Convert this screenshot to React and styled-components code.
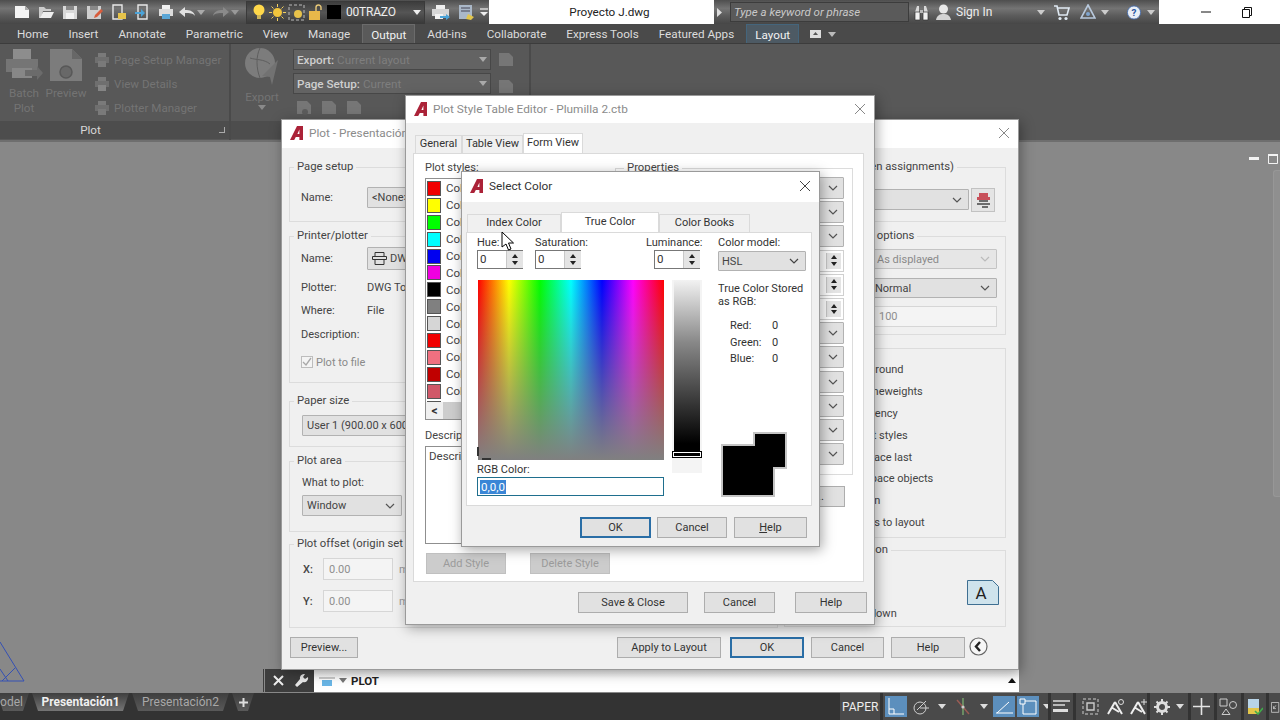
import React from "react";
import styled, { createGlobalStyle } from "styled-components";

const GlobalStyle = createGlobalStyle`
  html, body { margin: 0; padding: 0; background: #888; }
  body { font-family: Roboto, "Noto Sans", "Liberation Sans", sans-serif; font-size: 11px; color: #333; }
  * { box-sizing: border-box; }
`;

const Page = styled.div`
  position: relative;
  width: 1280px;
  height: 720px;
  overflow: hidden;
  display: flex;
  flex-direction: column;
`;

/* title bar */
const TitleBar = styled.div`
  height: 24px;
  display: flex;
  background: #fff;
  flex: none;
`;
const DarkStrip = styled.div`
  display: flex;
  align-items: center;
  height: 24px;
  background: linear-gradient(#4e4e4e, #747474 35%, #5c5c5c 65%, #474747);
`;
const Qat = styled(DarkStrip)`
  width: 489px;
  padding-left: 10px;
`;
const QatItem = styled.div`
  width: ${(p) => p.$w || 24}px;
  height: 24px;
  flex: none;
  display: flex;
  align-items: center;
  justify-content: ${(p) => (p.$start ? "flex-start" : "center")};
`;
const LayerCombo = styled.div`
  width: 179px;
  height: 23px;
  padding-left: 3px;
  display: flex;
  align-items: center;
  background: linear-gradient(#3d3d3d, #555 50%, #3a3a3a);
  border: 1px solid #3a3a3a;
  flex: none;
`;
const LayerName = styled.span`
  flex: 1;
  margin-left: 2px;
  color: #eee;
  font-size: 12px;
  letter-spacing: -0.2px;
`;
const DocTitle = styled.div`
  width: 225px;
  text-align: center;
  line-height: 24px;
  color: #222;
  font-size: 11.7px;
  padding-left: 16px;
`;
const InfoCenter = styled(DarkStrip)`
  width: 445px;
  padding-left: 2px;
`;
const SearchBox = styled.div`
  width: 179px;
  height: 20px;
  margin-left: 8px;
  padding-left: 3px;
  background: #5a5a5a;
  border: 1px solid #3c3c3c;
  color: #c9c9c9;
  font-style: italic;
  font-size: 11.5px;
  line-height: 18px;
  flex: none;
`;
const SignIn = styled.span`
  color: #eee;
  font-size: 12px;
  width: 80px;
  margin-left: 3px;
  flex: none;
`;
const WinButtons = styled.div`
  flex: 1;
  display: flex;
  align-items: center;
  padding-left: 42px;
  gap: 31px;
`;

/* ribbon */
const TabsBar = styled.div`
  height: 20px;
  flex: none;
  display: flex;
  align-items: stretch;
  padding-left: 7px;
  background: #4a4a4a;
  border-bottom: 1px solid #3c3c3c;
`;
const RibbonTab = styled.div`
  padding: 1px 10px 0;
  display: flex;
  align-items: center;
  font-size: 11.7px;
  color: ${(p) => (p.$active || p.$layout ? "#f2f2f2" : "#dcdcdc")};
  background: ${(p) => (p.$active ? "#5a5a5a" : p.$layout ? "#4d5a64" : "transparent")};
  border: ${(p) => (p.$active ? "1px solid #6b6b6b" : p.$layout ? "1px solid #44657c" : "0")};
  border-bottom: 0;
  ${(p) => p.$active && "padding: 1px 8px 0; margin: 0 2px 0 2px;"}
  ${(p) => p.$layout && "padding: 1px 8px 0; margin-left: 2px;"}
`;
const Ribbon = styled.div`
  height: 98px;
  flex: none;
  display: flex;
  background: #585858;
  border-bottom: 2px solid #6e6e6e;
`;
const Panel = styled.div`
  width: ${(p) => p.$w}px;
  flex: none;
  display: flex;
  flex-direction: column;
  border-right: 2px solid #4a4a4a;
`;
const PanelBody = styled.div`
  flex: 1;
  display: flex;
  padding: 4px 0 0 ${(p) => p.$pad || 6}px;
`;
const PanelTitle = styled.div`
  height: 18px;
  margin-bottom: 1px;
  padding-right: ${(p) => p.$pr || 0}px;
  position: relative;
  background: #4d4d4d;
  color: #d6d6d6;
  text-align: center;
  line-height: 18px;
  font-size: 11.7px;
`;
const PanelCorner = styled.span`
  position: absolute;
  right: 4px;
  top: 6px;
  width: 6px;
  height: 6px;
  border-right: 1px solid #aaa;
  border-bottom: 1px solid #aaa;
`;
const BigTool = styled.div`
  width: ${(p) => p.$w}px;
  flex: none;
  display: flex;
  flex-direction: column;
  align-items: center;
  text-align: center;
  font-size: 11.7px;
  line-height: 15px;
  color: #747474;
`;
const BigLabel = styled.div`
  margin-top: 4px;
`;
const SmallTools = styled.div`
  display: flex;
  flex-direction: column;
  gap: 6px;
  margin: 3px 0 0 5px;
`;
const SmallTool = styled.div`
  height: 18px;
  display: flex;
  align-items: center;
  gap: 4px;
  color: #747474;
  font-size: 11.6px;
`;
const ExportStack = styled.div`
  margin: 1px 0 0 12px;
  display: flex;
  flex-direction: column;
`;
const ExtraStack = styled.div`
  margin: 4px 0 0 7px;
  display: flex;
  flex-direction: column;
  gap: 10px;
`;
const RibbonCombo = styled.div`
  width: 198px;
  height: 21px;
  padding: 0 3px;
  display: flex;
  align-items: center;
  background: #636363;
  border: 1px solid #474747;
  color: #7e7e7e;
  font-size: 11.7px;
  margin-bottom: 3px;
`;
const ComboKey = styled.b`
  color: #cfcfcf;
  font-weight: 500;
  margin-right: 3px;
`;
const ComboFill = styled.span`
  flex: 1;
`;
const MiniRow = styled.div`
  display: flex;
  gap: 9px;
  margin: 3px 0 0 3px;
`;

/* workspace */
const Workspace = styled.div`
  position: relative;
  flex: 1;
  background: #888;
`;
const ViewControls = styled.div`
  position: absolute;
  right: 2px;
  top: 12px;
  display: flex;
  align-items: center;
  gap: 9px;
`;
const NavStrip = styled.div`
  position: absolute;
  right: 0;
  top: 28px;
  width: 7px;
  height: 327px;
  background: #8f8f8f;
  border: 1px solid #979797;
  border-right: 0;
  border-radius: 3px 0 0 3px;
`;
const Ucs = styled.svg`
  position: absolute;
  left: 0;
  bottom: 10px;
`;
const CommandBar = styled.div`
  position: absolute;
  left: 262px;
  bottom: 1px;
  width: 757px;
  height: 23px;
  display: flex;
  align-items: center;
`;
const CommandTools = styled.div`
  width: 52px;
  height: 100%;
  padding-left: 8px;
  display: flex;
  align-items: center;
  gap: 10px;
  background: #3d3d3d;
  border-left: 3px double #8a8a8a;
`;
const CommandInput = styled.div`
  flex: 1;
  height: 100%;
  padding: 0 3px 0 5px;
  display: flex;
  align-items: center;
  gap: 4px;
  background: linear-gradient(#ececec, #fff 40%);
  font-size: 11.5px;
  font-weight: 700;
  color: #222;
`;

/* status bar */
const StatusBar = styled.div`
  height: 27px;
  flex: none;
  display: flex;
  align-items: flex-start;
  background: #333;
`;
const LayoutTab = styled.div`
  width: ${(p) => p.$w}px;
  height: 18px;
  margin: 0 3px 0 ${(p) => p.$ml || 0}px;
  padding-right: ${(p) => (p.$cut ? 6 : 0)}px;
  display: flex;
  align-items: center;
  justify-content: ${(p) => (p.$cut ? "flex-end" : "center")};
  font-size: 12px;
  font-weight: ${(p) => (p.$active ? 700 : 400)};
  color: ${(p) => (p.$active ? "#f0f0f0" : "#a8a8a8")};
  background: linear-gradient(#3e3e3e, ${(p) => (p.$active ? "#757575" : "#595959")});
  clip-path: polygon(0 0, 100% 0, calc(100% - 6px) 100%, 6px 100%);
`;
const StatusIcons = styled.div`
  margin-left: auto;
  width: 440px;
  height: 27px;
  display: flex;
  gap: 3px;
`;
const StatusGroup = styled.div`
  width: ${(p) => p.$w}px;
  height: 27px;
  flex: none;
  display: flex;
  align-items: center;
  padding: 0 2px;
  gap: 2px;
  background: #4a4a4a;
  overflow: hidden;
`;
const StatusBtn = styled.div`
  width: ${(p) => p.$w || 22}px;
  height: 21px;
  flex: none;
  display: flex;
  align-items: center;
  justify-content: center;
  background: ${(p) => (p.$on ? "#5c8fbd" : "transparent")};
`;
const PaperLabel = styled.span`
  width: 100%;
  text-align: center;
  color: #eee;
  font-size: 12px;
`;

/* dialogs */
const Dialog = styled.div`
  position: absolute;
  left: ${(p) => p.$x}px;
  top: ${(p) => p.$y}px;
  width: ${(p) => p.$w}px;
  height: ${(p) => p.$h}px;
  display: flex;
  flex-direction: column;
  background: #f0f0f0;
  border: 1px solid #9a9a9a;
  box-shadow: 2px 3px 12px rgba(0, 0, 0, 0.35);
  overflow: hidden;
`;
const DialogHead = styled.div`
  height: ${(p) => p.$h}px;
  flex: none;
  padding: 0 8px 2px;
  display: flex;
  align-items: center;
  gap: 5px;
  background: #fff;
  color: ${(p) => (p.$active ? "#333" : "#8b8b8b")};
  font-size: 11.8px;
`;
const HeadText = styled.span`
  flex: 1;
`;
const PlotBody = styled.div`
  flex: 1;
  padding: 11px 11px 0 7px;
  display: grid;
  grid-template-columns: 489px 222px;
  grid-template-rows: 469px 20px;
  column-gap: 6px;
  row-gap: 9px;
`;
const Column = styled.div`
  display: flex;
  flex-direction: column;
  min-width: 0;
`;
const Group = styled.fieldset`
  margin: ${(p) => p.$mt || 0}px 0 0;
  padding: ${(p) => p.$pt || 0}px ${(p) => p.$pr || 8}px 0 ${(p) => p.$pl || 11}px;
  height: ${(p) => p.$h}px;
  min-width: 0;
  flex: none;
  border: 1px solid #dcdcdc;
`;
const Legend = styled.legend`
  margin-left: ${(p) => p.$ml ?? -7}px;
  padding: 0 3px;
  width: max-content;
  line-height: 16px;
  font-size: 11.3px;
  white-space: nowrap;
  color: #444;
`;
const Row = styled.div`
  margin-top: ${(p) => p.$mt || 0}px;
  display: flex;
  align-items: center;
  min-height: ${(p) => p.$h || 20}px;
  color: ${(p) => (p.$dim ? "#8a8a8a" : "#444")};
  white-space: nowrap;
`;
const FieldLabel = styled.span`
  width: ${(p) => p.$w}px;
  flex: none;
  font-weight: ${(p) => (p.$bold ? 500 : 400)};
`;
const Unit = styled.span`
  width: 30px;
  margin-left: 6px;
  flex: none;
  color: #999;
`;
const Combo = styled.div`
  flex: ${(p) => (p.$w ? "none" : 1)};
  width: ${(p) => (p.$w ? `${p.$w}px` : "auto")};
  min-width: 0;
  height: ${(p) => p.$h || 21}px;
  margin-top: ${(p) => p.$mt || 0}px;
  padding: 0 6px 0 ${(p) => p.$pl || 4}px;
  display: flex;
  align-items: center;
  background: ${(p) => (p.$off ? "#e6e6e6" : "#e1e1e1")};
  border: 1px solid ${(p) => (p.$off ? "#c4c4c4" : "#b2b2b2")};
  border-radius: 1px;
  color: ${(p) => (p.$off ? "#8a8a8a" : "#444")};
  white-space: nowrap;
`;
const ComboText = styled.span`
  flex: 1;
  overflow: hidden;
  display: flex;
  align-items: center;
  gap: 3px;
`;
const Edit = styled.div`
  width: ${(p) => (p.$w ? `${p.$w}px` : "auto")};
  flex: ${(p) => (p.$w ? "none" : 1)};
  height: ${(p) => p.$h || 21}px;
  padding-left: 5px;
  display: flex;
  align-items: center;
  background: #f4f4f4;
  border: 1px solid #d6d6d6;
  color: #8f8f8f;
`;
const Btn = styled.div`
  width: ${(p) => p.$w}px;
  height: 21px;
  flex: none;
  margin-left: ${(p) => p.$ml || 0}px;
  display: flex;
  align-items: center;
  justify-content: center;
  font-size: 11px;
  color: ${(p) => (p.$off ? "#9b9b9b" : "#333")};
  background: ${(p) => (p.$off ? "#cccccc" : "#e1e1e1")};
  border: ${(p) => (p.$primary ? "2px solid #2a6ea6" : `1px solid ${p.$off ? "#c0c0c0" : "#adadad"}`)};
`;
const Mnemonic = styled.span`
  text-decoration: underline;
`;
const FootRow = styled.div`
  grid-column: 1 / -1;
  display: flex;
  align-items: center;
  padding-left: 1px;
`;
const FootRight = styled.div`
  margin-left: auto;
  padding-right: 41px;
  display: flex;
  align-items: center;
  position: relative;
`;
const BackCircle = styled.svg`
  position: absolute;
  right: 18px;
  top: 0;
`;
const CheckBox = styled.span`
  width: 12px;
  height: 12px;
  margin-right: 3px;
  flex: none;
  border: 1px solid #bdbdbd;
  background: #f4f4f4;
  display: flex;
  align-items: center;
  justify-content: center;
`;
const ToolSquare = styled.div`
  width: 24px;
  height: 24px;
  margin: 1px 0 0 2px;
  flex: none;
  display: flex;
  align-items: center;
  justify-content: center;
  background: #e4e4e4;
  border: 1px solid #c2c2c2;
`;
const OptionList = styled.div`
  padding: 4px 0 0 16px;
  display: flex;
  flex-direction: column;
  gap: 1.5px;
`;
const OptionRow = styled.div`
  height: 20.4px;
  line-height: 20px;
  color: #444;
  white-space: nowrap;
`;
const OrientRow = styled.div`
  display: flex;
  align-items: flex-start;
  justify-content: space-between;
  padding: 5px 0 0 16px;
`;
const PlainList = styled.div`
  display: flex;
  flex-direction: column;
  gap: 3px;
  line-height: 18px;
  color: #444;
`;
const OrientIcon = styled.svg`
  margin-top: 17px;
`;

/* plot style editor */
const TabsRow = styled.div`
  height: ${(p) => p.$h}px;
  flex: none;
  padding-left: ${(p) => p.$pl}px;
  display: flex;
  align-items: flex-end;
`;
const WinTab = styled.div`
  width: ${(p) => p.$w}px;
  height: ${(p) => (p.$active ? 20 : 18)}px;
  flex: none;
  padding-bottom: ${(p) => (p.$active ? 3 : 2)}px;
  display: flex;
  align-items: center;
  justify-content: center;
  font-size: 11px;
  color: #333;
  background: ${(p) => (p.$active ? "#fff" : "#f0f0f0")};
  border: 1px solid #dadada;
  border-bottom: 0;
`;
const WhitePanel = styled.div`
  height: ${(p) => p.$h}px;
  margin: 0 ${(p) => p.$mr}px 0 ${(p) => p.$ml}px;
  flex: none;
  background: #fff;
  border: 1px solid #dadada;
`;
const EditorGrid = styled.div`
  height: 100%;
  padding: 6px 10px 0 11px;
  display: grid;
  grid-template-columns: 180px 238px;
  column-gap: 10px;
`;
const SmallLabel = styled.div`
  height: 16px;
  margin-top: ${(p) => p.$mt || 0}px;
  line-height: 16px;
  color: #444;
`;
const StyleList = styled.div`
  height: 242px;
  margin-top: 2px;
  border: 1px solid #8f8f8f;
  display: flex;
  flex-direction: column;
`;
const StyleRows = styled.div`
  flex: 1;
  overflow: hidden;
  padding: 1px 2px 0 1px;
`;
const StyleRow = styled.div`
  height: 16.9px;
  display: flex;
  align-items: center;
  gap: 5px;
  color: #444;
  font-size: 11.5px;
`;
const Swatch = styled.span`
  width: 14px;
  height: 15px;
  flex: none;
  border: 1px solid #555;
  background: ${(p) => p.$c};
`;
const HScroll = styled.div`
  height: 17px;
  flex: none;
  display: flex;
  align-items: center;
  background: #f0f0f0;
`;
const ScrollArrow = styled.span`
  width: 17px;
  text-align: center;
  font-size: 12px;
  font-weight: 700;
  color: #333;
`;
const ScrollThumb = styled.span`
  flex: 1;
  height: 100%;
  background: #cdcdcd;
`;
const DescBox = styled.div`
  height: 98px;
  margin-top: 2px;
  padding: 2px 3px;
  border: 1px solid #8f8f8f;
  color: #444;
  font-size: 11.5px;
`;
const ActionRow = styled.div`
  margin-top: 9px;
  display: flex;
  gap: 24px;
  padding-left: 1px;
`;
const PropRows = styled.div`
  padding-top: 1px;
  display: flex;
  flex-direction: column;
  gap: 2.2px;
`;
const PropCombo = styled.div`
  height: 22px;
  padding-right: 5px;
  display: flex;
  align-items: center;
  justify-content: flex-end;
  background: #e1e1e1;
  border: 1px solid #b2b2b2;
  border-radius: 1px;
`;
const PropSpin = styled.div`
  height: 22px;
  padding: 2px;
  display: flex;
  justify-content: flex-end;
  background: #fff;
  border: 1px solid #d0d0d0;
`;
const SpinButtons = styled.div`
  width: ${(p) => p.$w || 15}px;
  height: 100%;
  flex: none;
  display: flex;
  flex-direction: column;
  align-items: center;
  justify-content: space-evenly;
  background: #e4e4e4;
  border-left: 1px solid #c8c8c8;
`;
const Arrow = styled.span`
  width: 0;
  height: 0;
  border-left: 3px solid transparent;
  border-right: 3px solid transparent;
  ${(p) => (p.$down ? "border-top: 4px solid #222;" : "border-bottom: 4px solid #222;")}
`;
const SaveAsRow = styled.div`
  margin-top: 11px;
  padding-right: 8px;
  display: flex;
  justify-content: flex-end;
`;
const DialogFoot = styled.div`
  margin-top: ${(p) => p.$mt}px;
  padding-right: ${(p) => p.$pr}px;
  display: flex;
  justify-content: flex-end;
`;

/* select color */
const ColorPanel = styled.div`
  height: 100%;
  padding: 1px 0 8px 10px;
  display: flex;
  gap: 16px;
`;
const ColorLeft = styled.div`
  width: 225px;
  flex: none;
  display: flex;
  flex-direction: column;
`;
const SpinRow = styled.div`
  padding-right: 2px;
  display: flex;
`;
const SpinField = styled.div`
  width: ${(p) => p.$w}px;
  margin-left: ${(p) => p.$ml || 0}px;
  display: flex;
  flex-direction: column;
  align-items: ${(p) => (p.$end ? "flex-end" : "flex-start")};
  white-space: nowrap;
`;
const SpinLabel = styled.span`
  height: 16px;
  line-height: 18px;
  color: #333;
  align-self: flex-start;
  white-space: nowrap;
`;
const SpinBox = styled.div`
  width: 46px;
  height: 19px;
  display: flex;
  background: #fff;
  border: 1px solid #777;
  border-right: 0;
  padding-left: 2px;
  line-height: 17px;
  color: #333;
  font-size: 11.5px;
`;
const SpinValue = styled.span`
  flex: 1;
`;
const ColorArea = styled.div`
  margin-top: 11px;
  display: flex;
  gap: 8px;
`;
const SpectrumCol = styled.div`
  width: 187px;
  flex: none;
`;
const Spectrum = styled.div`
  position: relative;
  width: 186px;
  height: 180px;
  margin-left: 1px;
  background: linear-gradient(to bottom, rgba(128, 128, 128, 0), #808080),
    linear-gradient(to right, #f00, #ff0, #0f0, #0ff, #00f, #f0f, #f00);
`;
const Mark = styled.span`
  position: absolute;
  left: ${(p) => p.$x}px;
  top: ${(p) => p.$y}px;
  width: ${(p) => p.$w}px;
  height: ${(p) => p.$h}px;
  background: #333;
`;
const RgbLabel = styled.div`
  margin-top: 2px;
  height: 15px;
  line-height: 15px;
  color: #333;
`;
const RgbInput = styled.div`
  height: 19px;
  padding-left: 2px;
  display: flex;
  align-items: center;
  background: #fff;
  border: 1px solid #1f6f8e;
`;
const Selected = styled.span`
  background: #3a86d6;
  color: #fff;
  font-size: 11.5px;
  line-height: 14px;
  padding: 0 1px;
`;
const LumTrack = styled.div`
  width: 30px;
  height: 193px;
  padding: 0 2px;
  flex: none;
  background: #f4f4f4;
`;
const LumBar = styled.div`
  position: relative;
  height: 178px;
  background: linear-gradient(#f2f2f2, #888 35%, #000 92%);
`;
const LumHandle = styled.span`
  position: absolute;
  left: -2px;
  right: -2px;
  bottom: 0;
  height: 7px;
  background: #000;
  border: 1px solid #000;
  box-shadow: inset 0 0 0 1px #fff;
`;
const ColorRight = styled.div`
  flex: 1;
  display: flex;
  flex-direction: column;
  color: #333;
`;
const StoredText = styled.div`
  margin-top: 11px;
  line-height: 13px;
  white-space: nowrap;
`;
const RgbValues = styled.div`
  margin-top: 10px;
  padding-left: 12px;
  display: grid;
  grid-template-columns: 42px 1fr;
  grid-auto-rows: 16.5px;
  line-height: 16px;
`;
const SwatchPair = styled.svg`
  margin: auto 0 0 3px;
`;
const Cursor = styled.svg`
  position: absolute;
  left: 501px;
  top: 231px;
`;

const Chevron = ({ c = "#555" }) => (
  <svg width="10" height="6" viewBox="0 0 10 6" fill="none" stroke={c} strokeWidth="1.2">
    <path d="M1 1l4 4 4-4" />
  </svg>
);
const Caret = ({ c = "#ddd" }) => (
  <svg width="8" height="5" viewBox="0 0 8 5"><path d="M0 0h8L4 5z" fill={c} /></svg>
);
const CloseX = ({ c = "#555" }) => (
  <svg width="12" height="12" viewBox="0 0 12 12" stroke={c} strokeWidth="1"><path d="M1 1l10 10M11 1L1 11" /></svg>
);
const AcadA = () => (
  <svg width="14" height="14" viewBox="0 0 14 14">
    <path fillRule="evenodd" d="M0 14L7 0h6v14H9.400v-3H5.800l-1.600 3zM7.400 8h2V3.600z" fill="#ab2238" />
  </svg>
);
const Spin = ({ w }) => (
  <SpinButtons $w={w}><Arrow /><Arrow $down /></SpinButtons>
);

const I = ({ w = 18, h = 18, box, children }) => (
  <svg width={w} height={h} viewBox={box || `0 0 ${w} ${h}`}>{children}</svg>
);

const qatIcons = [
  <I key="n"><path d="M2 3h10l4 4v8H2z" fill="#f4f4f4" /><path d="M12 3v4h4z" fill="#aaa" /></I>,
  <I key="o"><path d="M2 15V4h5l2 2h5v2H6l-2 7z" fill="#ccc" /><path d="M6 9h11l-3 6H3z" fill="#eee" /></I>,
  <I key="s"><path d="M2 3h14v13H2z" fill="#d8d8d8" /><path d="M5 3h8v4H5z" fill="#888" /><path d="M5 10h8v6H5z" fill="#f2f2f2" /></I>,
  <I key="a"><path d="M2 3h14v13H2z" fill="#cfcfcf" /><path d="M5 3h8v4H5z" fill="#888" /><path d="M9 15l1-3 6-6 2 2-6 6z" fill="#d85c3c" /></I>,
  <I key="c"><path d="M4 2h9v14H4z" fill="none" stroke="#e8e8e8" strokeWidth="1.400" /><path d="M9 10h8v6H9z" fill="#e6c34a" /></I>,
  <I key="p"><path d="M5 2h9v14H5z" fill="none" stroke="#e8e8e8" strokeWidth="1.400" /><path d="M2 9h6V6l4 4-4 4v-3H2z" fill="#4aa3d8" /></I>,
  <I key="r"><path d="M5 2h8v4H5z" fill="#f2f2f2" /><path d="M2 6h14v7H2z" fill="#dcdcdc" /><path d="M5 11h8v5H5z" fill="#5aa6d6" /></I>,
];

const Printer = ({ c = "#757575" }) => (
  <I w={38} h={34}>
    <path d="M8 1h18v10H8z" fill="#8d8d8d" />
    <path d="M1 11h32v13H1z" fill={c} />
    <path d="M7 20h20v10H7z" fill="#878787" />
    <path d="M20 22h12v-4l6 7-6 7v-4H20z" fill="#6b6b6b" />
  </I>
);
const PreviewIcon = () => (
  <I w={34} h={34}>
    <path d="M1 1h22l10 10v22H1z" fill="#7c7c7c" />
    <path d="M23 1v10h10z" fill="#676767" />
    <circle cx="17" cy="24" r="6" fill="#686868" stroke="#585858" strokeWidth="1.500" />
  </I>
);
const SmallPrint = ({ kind }) => (
  <I w={16} h={16}>
    <path d="M4 1h8v4H4z" fill="#7a7a7a" />
    <path d="M1 5h14v6H1z" fill="#6f6f6f" />
    <path d="M4 9h8v6H4z" fill={kind ? "#858585" : "#7a7a7a"} />
  </I>
);
const ExportIcon = () => (
  <I w={34} h={38}>
    <circle cx="15" cy="15" r="15" fill="#7c7c7c" />
    <path d="M5 10c6 2 14 1 20 6M15 0c-4 8-4 20 0 30" stroke="#5e5e5e" fill="none" />
    <path d="M33 12L17 28l8 1 2 8z" fill="#727272" />
  </I>
);
const PageMini = ({ t }) => (
  <svg width="16" height="17" viewBox="0 0 16 17">
    <path d="M1 1h10l4 4v9H1z" fill="#767676" />
    {t === "m" && <circle cx="9" cy="12" r="3" fill="#5c5c5c" />}
  </svg>
);

const ribbonTabs = ["Home", "Insert", "Annotate", "Parametric", "View", "Manage"];
const ribbonTabs2 = ["Add-ins", "Collaborate", "Express Tools", "Featured Apps"];

const styleColors = [
  "#f00000", "#ffff00", "#00ff00", "#00ffff", "#0000f0", "#f000e0", "#000000", "#808080",
  "#d6d6d6", "#f00000", "#f07080", "#c00000", "#d05868", "#000000",
];

const App = () => {
  return (
    <Page>
      <GlobalStyle />
      <TitleBar>
        <Qat>
          {qatIcons.map((icon, i) => (
            <QatItem key={i}>{icon}</QatItem>
          ))}
          <QatItem $w={34} $start>
            <I w={18} h={14}><path d="M1 7l6-5v3c5 0 9 1 10 6-2-3-5-3-10-3v4z" fill="#e2e2e2" /></I>
            <QatItem $w={10}><Caret c="#aaa" /></QatItem>
          </QatItem>
          <QatItem $w={34} $start>
            <I w={18} h={14}><path d="M17 7l-6-5v3C6 5 2 6 1 11c2-3 5-3 10-3v4z" fill="#8a8a8a" /></I>
            <QatItem $w={10}><Caret c="#999" /></QatItem>
          </QatItem>
          <LayerCombo>
            <QatItem $w={18}>
              <I w={14} h={17}><circle cx="7" cy="6" r="5.500" fill="#ffd84a" /><path d="M5 11h4v4H5z" fill="#cdb458" /></I>
            </QatItem>
            <QatItem $w={18}>
              <I w={17} h={17}><circle cx="8.500" cy="8.500" r="4.500" fill="#f2c53c" /><path d="M8.500 0v3M8.500 14v3M0 8.500h3M14 8.500h3M2.500 2.500l2 2M12.500 12.500l2 2M14.500 2.500l-2 2M4.500 12.500l-2 2" stroke="#f2d060" /></I>
            </QatItem>
            <QatItem $w={20}>
              <I w={17} h={17}><path d="M1 1h15v15H1z" fill="none" stroke="#bbb" strokeDasharray="3 2" /><circle cx="10" cy="10" r="4" fill="#e8c24a" /></I>
            </QatItem>
            <QatItem $w={18}>
              <I w={15} h={17}><path d="M1 7h11v9H1z" fill="#e8b84a" /><path d="M8 7V3.500a2.500 2.500 0 0 1 5 0V6" fill="none" stroke="#e8c878" strokeWidth="1.400" /></I>
            </QatItem>
            <QatItem $w={20}>
              <I w={14} h={14}><path d="M0 0h14v14H0z" fill="#000" /></I>
            </QatItem>
            <LayerName>00TRAZO</LayerName>
            <QatItem $w={14}><Caret c="#eee" /></QatItem>
          </LayerCombo>
          <QatItem $w={30}>
            <I w={19} h={17}><path d="M5 1h9v4H5z" fill="#eee" /><path d="M1 5h17v7H1z" fill="#d6d6d6" /><path d="M4 10h8v5H4z" fill="#f2f2f2" /><path d="M9 12h6v-2l4 3-4 3v-2H9z" fill="#4aa3d8" /></I>
          </QatItem>
          <QatItem $w={22}>
            <I w={17} h={17}><path d="M1 1h13v14H1z" fill="#aab8c8" /><path d="M3 4h9M3 7h9" stroke="#445" /><path d="M8 15l2-5 6 3-3 3z" fill="#e2c64c" /></I>
          </QatItem>
          <QatItem $w={14}>
            <I w={10} h={8}><path d="M1 1h8" stroke="#eee" strokeWidth="1.200" /><path d="M1 4h8L5 8z" fill="#eee" /></I>
          </QatItem>
        </Qat>
        <DocTitle>Proyecto J.dwg</DocTitle>
        <InfoCenter>
          <QatItem $w={6}><I w={5} h={9}><path d="M0 0l5 4.500L0 9z" fill="#ddd" /></I></QatItem>
          <SearchBox>Type a keyword or phrase</SearchBox>
          <QatItem $w={24}>
            <I w={15} h={17}>
              <path d="M1 8l2-6h2v6zM14 8l-2-6h-2v6z" fill="#d8d8d8" />
              <path d="M1 8h5v8H1zM9 8h5v8H9z" fill="#f2f2f2" stroke="#333" strokeWidth=".7" />
              <path d="M6 6h3v3H6z" fill="#bbb" />
            </I>
          </QatItem>
          <QatItem $w={20}>
            <I w={15} h={17}><circle cx="7.500" cy="5" r="4.500" fill="#e8e8e8" /><path d="M0 16c1-5 4-6 7.500-6s6.500 1 7.500 6z" fill="#d4d4d4" /></I>
          </QatItem>
          <SignIn>Sign In</SignIn>
          <QatItem $w={10}><Caret c="#ccc" /></QatItem>
          <QatItem $w={30}>
            <I w={17} h={17}><path d="M1 2h3l2 9h8l2-7H5" fill="none" stroke="#dfe9f2" strokeWidth="1.600" /><circle cx="7" cy="14.500" r="1.600" fill="#dfe9f2" /><circle cx="13" cy="14.500" r="1.600" fill="#dfe9f2" /></I>
          </QatItem>
          <QatItem $w={24}>
            <I w={16} h={16}><path d="M8 1l7 13H1z" fill="none" stroke="#b8c9dd" strokeWidth="1.600" /><circle cx="8" cy="10" r="2" fill="#7ea4cf" /></I>
          </QatItem>
          <QatItem $w={10}><Caret c="#ccc" /></QatItem>
          <QatItem $w={17} />
          <QatItem $w={14}>
            <I w={17} h={17}><circle cx="8.500" cy="8.500" r="8" fill="#e8eef6" stroke="#3a64a8" /><text x="8.500" y="13" fontSize="12" fontWeight="700" fill="#2a56a0" textAnchor="middle">?</text></I>
          </QatItem>
          <QatItem $w={20}><Caret c="#ccc" /></QatItem>
        </InfoCenter>
        <WinButtons>
          <I w={10} h={2}><path d="M0 1h10" stroke="#111" /></I>
          <I w={10} h={11}><path d="M2.500 2.500V.5h7v8h-2M.5 2.500h7v8h-7z" fill="none" stroke="#111" /></I>
        </WinButtons>
      </TitleBar>

      <TabsBar>
        {ribbonTabs.map((t) => (
          <RibbonTab key={t}>{t}</RibbonTab>
        ))}
        <RibbonTab $active>Output</RibbonTab>
        {ribbonTabs2.map((t) => (
          <RibbonTab key={t}>{t}</RibbonTab>
        ))}
        <RibbonTab $layout>Layout</RibbonTab>
        <RibbonTab>
          <I w={13} h={8}><path d="M1 0h11v8H1z" fill="#ddd" /><path d="M4 5h5L6.500 2z" fill="#555" /></I>
          &nbsp;&nbsp;<Caret c="#bbb" />
        </RibbonTab>
      </TabsBar>

      <Ribbon>
        <Panel $w={231}>
          <PanelBody $pad={5}>
            <BigTool $w={38}>
              <Printer />
              <BigLabel>Batch<br />Plot</BigLabel>
            </BigTool>
            <BigTool $w={46}>
              <PreviewIcon />
              <BigLabel>Preview</BigLabel>
            </BigTool>
            <SmallTools>
              <SmallTool><SmallPrint />Page Setup Manager</SmallTool>
              <SmallTool><SmallPrint kind />View Details</SmallTool>
              <SmallTool><SmallPrint />Plotter Manager</SmallTool>
            </SmallTools>
          </PanelBody>
          <PanelTitle $pr={48}>Plot<PanelCorner /></PanelTitle>
        </Panel>
        <Panel $w={300}>
          <PanelBody $pad={12}>
            <BigTool $w={38}>
              <ExportIcon />
              <BigLabel>Export</BigLabel>
              <Caret c="#8a8a8a" />
            </BigTool>
            <ExportStack>
              <RibbonCombo>
                <ComboKey>Export:</ComboKey><ComboFill>Current layout</ComboFill><Caret c="#aaa" />
              </RibbonCombo>
              <RibbonCombo>
                <ComboKey>Page Setup:</ComboKey><ComboFill>Current</ComboFill><Caret c="#aaa" />
              </RibbonCombo>
              <MiniRow>
                <PageMini t="m" />
                <PageMini />
                <PageMini />
              </MiniRow>
            </ExportStack>
            <ExtraStack>
              <PageMini />
              <PageMini />
            </ExtraStack>
          </PanelBody>
          <PanelTitle />
        </Panel>
      </Ribbon>

      <Workspace>
        <ViewControls>
          <I w={10} h={4}><path d="M0 0h10v3H0z" fill="#f2f2f2" /></I>
          <I w={10} h={10}><path d="M.5.5h9v9h-9z" fill="none" stroke="#f2f2f2" /><path d="M0 0h10v2H0z" fill="#f2f2f2" /></I>
        </ViewControls>
        <NavStrip />
        <Ucs width="26" height="42" viewBox="0 0 26 42" fill="none" stroke="#3450b4" strokeWidth="1">
          <path d="M0 1l24 39H0M0 28l8 12M15 27L2 40" />
        </Ucs>
        <CommandBar>
          <CommandTools>
            <I w={11} h={11}><path d="M1 1l9 9M10 1l-9 9" stroke="#eee" strokeWidth="2" /></I>
            <I w={15} h={15}><path d="M10 1a4 4 0 0 0-4 5L1 12l2 2 6-5a4 4 0 0 0 5-5l-3 2-2-2 2-3z" fill="#e8e8e8" /></I>
          </CommandTools>
          <CommandInput>
            <I w={16} h={10}><path d="M0 2h16" stroke="#999" /><path d="M3 4h10v6H3z" fill="#6ab6e6" /></I>
            <Caret c="#777" />
            <ComboFill>PLOT</ComboFill>
            <I w={8} h={5}><path d="M0 5h8L4 0z" fill="#111" /></I>
          </CommandInput>
        </CommandBar>
      </Workspace>

      <StatusBar>
        <LayoutTab $w={32} $cut $ml={-3}>odel</LayoutTab>
        <LayoutTab $w={97} $active>Presentación1</LayoutTab>
        <LayoutTab $w={97}>Presentación2</LayoutTab>
        <LayoutTab $w={22}>
          <I w={9} h={9}><path d="M4.500 0v9M0 4.500h9" stroke="#ddd" strokeWidth="2" /></I>
        </LayoutTab>
        <StatusIcons>
          <StatusGroup $w={40}><PaperLabel>PAPER</PaperLabel></StatusGroup>
          <StatusGroup $w={165}>
            <StatusBtn $on>
              <I w={16} h={17}><path d="M1 0v16h15M1 11h5v5" fill="none" stroke="#fff" /></I>
            </StatusBtn>
            <StatusBtn $w={24}>
              <I w={17} h={17}><circle cx="7" cy="10" r="6" fill="none" stroke="#cfcfcf" /><path d="M4 12l9-9M7 10h9" stroke="#cfcfcf" /></I>
            </StatusBtn>
            <StatusBtn $w={14}><Caret /></StatusBtn>
            <StatusBtn $w={24}>
              <I w={15} h={17}><path d="M7 0v17" stroke="#79a86d" strokeWidth="1.400" /><path d="M1 2l12 14" stroke="#9c5c54" strokeWidth="1.400" /><circle cx="7" cy="9" r="1.600" fill="#ccc" /></I>
            </StatusBtn>
            <StatusBtn $w={14}><Caret /></StatusBtn>
            <StatusBtn $on>
              <I w={17} h={15}><path d="M0 14h17M1 14L13 3" fill="none" stroke="#fff" /></I>
            </StatusBtn>
            <StatusBtn $on>
              <I w={18} h={17}><path d="M4 3h13v13H4z" fill="none" stroke="#fff" /><path d="M1 1h5v5H1z" fill="#5c8fbd" stroke="#fff" /></I>
            </StatusBtn>
            <StatusBtn $w={12}><Caret /></StatusBtn>
          </StatusGroup>
          <StatusGroup $w={22}>
            <I w={17} h={13}><path d="M0 1h17M0 5h12" stroke="#ddd" strokeWidth="1.400" /><path d="M0 9h15v3H0z" fill="#ddd" /></I>
          </StatusGroup>
          <StatusGroup $w={71}>
            <StatusBtn $w={24}>
              <I w={17} h={17}><path d="M1 1h15v15H1z" fill="none" stroke="#ccc" strokeDasharray="3 2" /><path d="M5 5h7v7H5z" fill="none" stroke="#ccc" strokeWidth="1.400" /></I>
            </StatusBtn>
            <StatusBtn $w={22}>
              <I w={17} h={17}><path d="M8 4L1 16M8 4l7 12M4 9l8 5" stroke="#eee" strokeWidth="2" fill="none" /><circle cx="14" cy="4" r="2.500" fill="none" stroke="#ddd" /></I>
            </StatusBtn>
            <StatusBtn $w={20}>
              <I w={17} h={17}><path d="M8 4L1 16M8 4l7 12M4 9l8 5" stroke="#eee" strokeWidth="2" fill="none" /><path d="M14 1v6M11 4h6" stroke="#ddd" /></I>
            </StatusBtn>
          </StatusGroup>
          <StatusGroup $w={38}>
            <StatusBtn $w={20}>
              <I w={16} h={16}><circle cx="8" cy="8" r="4.500" fill="none" stroke="#ddd" strokeWidth="3" /><path d="M8 0v3M8 13v3M0 8h3M13 8h3M2.500 2.500l2 2M11.500 11.500l2 2M13.500 2.500l-2 2M4.500 11.500l-2 2" stroke="#ddd" strokeWidth="2" /></I>
            </StatusBtn>
            <StatusBtn $w={12}><Caret /></StatusBtn>
          </StatusGroup>
          <StatusGroup $w={23}>
            <I w={17} h={17}><path d="M8.500 0v17M0 8.500h17" stroke="#e4e4e4" strokeWidth="1.600" /></I>
          </StatusGroup>
          <StatusGroup $w={24}>
            <I w={18} h={17}><path d="M1 1h7v7H1z" fill="none" stroke="#ccc" /><circle cx="14" cy="7" r="3.500" fill="none" stroke="#ccc" /><path d="M7 11l4 5.500H3z" fill="none" stroke="#ccc" /></I>
          </StatusGroup>
          <StatusGroup $w={22}>
            <I w={17} h={17}><path d="M2 1h11v15H2z" fill="#b8d4e8" /><path d="M2 10h11v6H2z" fill="#e3c64a" /><path d="M9 13l3 3 5-6" stroke="#3fae49" strokeWidth="1.600" fill="none" /></I>
          </StatusGroup>
          <StatusGroup $w={13}>
            <I w={11} h={14}><path d="M.5 1.500h9v12h-9z" fill="none" stroke="#ccc" /><path d="M6 5L3 9M3 6v3h3" stroke="#ccc" fill="none" /></I>
          </StatusGroup>
        </StatusIcons>
      </StatusBar>

      <Dialog $x={281} $y={119} $w={738} $h={551}>
        <DialogHead $h={28}><AcadA /><HeadText>Plot - Presentación1</HeadText><CloseX c="#888" /></DialogHead>
        <PlotBody>
          <Column>
            <Group $h={63} $pt={12}>
              <Legend>Page setup</Legend>
              <Row $h={21}>
                <FieldLabel $w={66}>Name:</FieldLabel>
                <Combo>&lt;None&gt;</Combo>
              </Row>
            </Group>
            <Group $h={155} $mt={6} $pt={3}>
              <Legend>Printer/plotter</Legend>
              <Row $h={23}>
                <FieldLabel $w={66}>Name:</FieldLabel>
                <Combo $h={23}>
                  <ComboText>
                    <I w={15} h={13}><path d="M3 .5h9v4H3zM.5 4.500h14v3H.5zM3 7.500h9v5H3z" fill="none" stroke="#333" /></I>
                    DWG To PDF.pc3
                  </ComboText>
                </Combo>
              </Row>
              <Row $mt={7}><FieldLabel $w={66}>Plotter:</FieldLabel>DWG To PDF</Row>
              <Row $mt={3}><FieldLabel $w={66}>Where:</FieldLabel>File</Row>
              <Row $mt={4}><FieldLabel $w={66}>Description:</FieldLabel></Row>
              <Row $mt={8} $dim>
                <CheckBox>
                  <I w={10} h={10}><path d="M1 5l3 3 5-7" fill="none" stroke="#a8a8a8" strokeWidth="1.300" /></I>
                </CheckBox>
                Plot to file
              </Row>
            </Group>
            <Group $h={54} $mt={10} $pt={6} $pl={12}>
              <Legend $ml={-8}>Paper size</Legend>
              <Row $h={21}><Combo>User 1 (900.00 x 600.00 MM)</Combo></Row>
            </Group>
            <Group $h={79} $mt={6} $pt={5} $pl={12}>
              <Legend $ml={-8}>Plot area</Legend>
              <Row $h={17}>What to plot:</Row>
              <Row $h={21} $mt={4}>
                <Combo $w={100}><ComboText>Window</ComboText><Chevron /></Combo>
              </Row>
            </Group>
            <Group $h={92} $mt={4} $pt={6} $pl={13}>
              <Legend $ml={-9}>Plot offset (origin set to printable area)</Legend>
              <Row $h={22}>
                <FieldLabel $w={20} $bold>X:</FieldLabel>
                <Edit $w={70} $h={22}>0.00</Edit>
                <Unit>mm</Unit>
              </Row>
              <Row $h={22} $mt={10}>
                <FieldLabel $w={20} $bold>Y:</FieldLabel>
                <Edit $w={70} $h={22}>0.00</Edit>
                <Unit>mm</Unit>
              </Row>
            </Group>
          </Column>
          <Column>
            <Group $h={63} $pt={12} $pl={80} $pr={10}>
              <Legend $ml={-85}>Plot style table (pen assignments)</Legend>
              <Row $h={21}>
                <Combo><ComboText /><Chevron /></Combo>
                <ToolSquare>
                  <I w={15} h={16}><path d="M3 1h9v4H3z" fill="#c8505a" /><path d="M1 5h13v3H1z" fill="#c8505a" /><path d="M3 9h9M1 12h13M6 15h6" stroke="#444" strokeWidth="1.500" /></I>
                </ToolSquare>
              </Row>
            </Group>
            <Group $h={107} $mt={6} $pt={5} $pl={88} $pr={8}>
              <Legend $ml={-86}>Shaded viewport options</Legend>
              <Row $h={20}>
                <Combo $off $h={20} $pl={3}><ComboText>As displayed</ComboText><Chevron c="#bbb" /></Combo>
              </Row>
              <Row $h={20} $mt={9}>
                <Combo $h={20} $pl={1}><ComboText>Normal</ComboText><Chevron /></Combo>
              </Row>
              <Row $h={21} $mt={8}><Edit $h={21}>100</Edit></Row>
            </Group>
            <Group $h={198} $mt={5}>
              <Legend>Plot options</Legend>
              <OptionList>
                <OptionRow>Plot in background</OptionRow>
                <OptionRow>Plot object lineweights</OptionRow>
                <OptionRow>Plot transparency</OptionRow>
                <OptionRow>Plot with plot styles</OptionRow>
                <OptionRow>Plot paperspace last</OptionRow>
                <OptionRow>Hide paperspace objects</OptionRow>
                <OptionRow>Plot stamp on</OptionRow>
                <OptionRow>Save changes to layout</OptionRow>
              </OptionList>
            </Group>
            <Group $h={85} $mt={4} $pr={6}>
              <Legend $ml={-9}>Drawing orientation</Legend>
              <OrientRow>
                <PlainList>
                  <span>Portrait</span>
                  <span>Landscape</span>
                  <span>Plot upside-down</span>
                </PlainList>
                <OrientIcon width="32" height="25" viewBox="0 0 32 25">
                  <path d="M.5.5h25l6 6v18H.5z" fill="#cfe3ec" stroke="#3f6f92" />
                  <text x="14" y="19" fontSize="17" fontFamily="Roboto" fill="#222" textAnchor="middle">A</text>
                </OrientIcon>
              </OrientRow>
            </Group>
          </Column>
          <FootRow>
            <Btn $w={68}>Preview...</Btn>
            <FootRight>
              <Btn $w={104}>Apply to Layout</Btn>
              <Btn $w={74} $ml={9} $primary>OK</Btn>
              <Btn $w={73} $ml={7}>Cancel</Btn>
              <Btn $w={74} $ml={7}>Help</Btn>
              <BackCircle width="19" height="19" viewBox="0 0 19 19">
                <circle cx="9.500" cy="9.500" r="8.500" fill="#f6f6f6" stroke="#666" strokeWidth="1.200" />
                <path d="M11 5L7 9.500l4 4.500" fill="none" stroke="#222" strokeWidth="2.400" />
              </BackCircle>
            </FootRight>
          </FootRow>
        </PlotBody>
      </Dialog>

      <Dialog $x={405} $y={95} $w={470} $h={530}>
        <DialogHead $h={27}><AcadA /><HeadText>Plot Style Table Editor - Plumilla 2.ctb</HeadText><CloseX c="#888" /></DialogHead>
        <TabsRow $h={30} $pl={9}>
          <WinTab $w={47}>General</WinTab>
          <WinTab $w={61}>Table View</WinTab>
          <WinTab $w={60} $active>Form View</WinTab>
        </TabsRow>
        <WhitePanel $h={429} $ml={7} $mr={10}>
          <EditorGrid>
            <div>
              <SmallLabel>Plot styles:</SmallLabel>
              <StyleList>
                <StyleRows>
                  {styleColors.map((c, i) => (
                    <StyleRow key={i}><Swatch $c={c} />Color_{i + 1}</StyleRow>
                  ))}
                </StyleRows>
                <HScroll><ScrollArrow>&lt;</ScrollArrow><ScrollThumb /></HScroll>
              </StyleList>
              <SmallLabel $mt={8}>Description:</SmallLabel>
              <DescBox>Description</DescBox>
              <ActionRow>
                <Btn $w={80} $off>Add Style</Btn>
                <Btn $w={80} $off>Delete Style</Btn>
              </ActionRow>
            </div>
            <div>
              <Group $h={315} $pl={8}>
                <Legend $ml={0}>Properties</Legend>
                <PropRows>
                  {[0, 1, 2].map((i) => (
                    <PropCombo key={i}><Chevron /></PropCombo>
                  ))}
                  {[0, 1, 2].map((i) => (
                    <PropSpin key={i}><Spin /></PropSpin>
                  ))}
                  {[0, 1, 2, 3, 4, 5].map((i) => (
                    <PropCombo key={i}><Chevron /></PropCombo>
                  ))}
                </PropRows>
              </Group>
              <SaveAsRow><Btn $w={90}>Save As...</Btn></SaveAsRow>
            </div>
          </EditorGrid>
        </WhitePanel>
        <DialogFoot $mt={10} $pr={7}>
          <Btn $w={110}>Save &amp; Close</Btn>
          <Btn $w={71} $ml={16}>Cancel</Btn>
          <Btn $w={72} $ml={20}>Help</Btn>
        </DialogFoot>
      </Dialog>

      <Dialog $x={461} $y={171} $w={359} $h={376}>
        <DialogHead $h={30} $active><AcadA /><HeadText>Select Color</HeadText><CloseX c="#444" /></DialogHead>
        <TabsRow $h={30} $pl={5}>
          <WinTab $w={94}>Index Color</WinTab>
          <WinTab $w={98} $active>True Color</WinTab>
          <WinTab $w={91}>Color Books</WinTab>
        </TabsRow>
        <WhitePanel $h={274} $ml={4} $mr={7}>
          <ColorPanel>
            <ColorLeft>
              <SpinRow>
                <SpinField $w={47}>
                  <SpinLabel>Hue:</SpinLabel>
                  <SpinBox><SpinValue>0</SpinValue><Spin w={17} /></SpinBox>
                </SpinField>
                <SpinField $w={47} $ml={11}>
                  <SpinLabel>Saturation:</SpinLabel>
                  <SpinBox><SpinValue>0</SpinValue><Spin w={17} /></SpinBox>
                </SpinField>
                <SpinField $w={54} $ml={64} $end>
                  <SpinLabel>Luminance:</SpinLabel>
                  <SpinBox><SpinValue>0</SpinValue><Spin w={17} /></SpinBox>
                </SpinField>
              </SpinRow>
              <ColorArea>
                <SpectrumCol>
                  <Spectrum>
                    <Mark $x={-1} $y={167} $w={2} $h={9} />
                    <Mark $x={4} $y={178} $w={9} $h={2} />
                  </Spectrum>
                  <RgbLabel>RGB Color:</RgbLabel>
                  <RgbInput><Selected>0,0,0</Selected></RgbInput>
                </SpectrumCol>
                <LumTrack>
                  <LumBar><LumHandle /></LumBar>
                </LumTrack>
              </ColorArea>
            </ColorLeft>
            <ColorRight>
              <SpinLabel>Color model:</SpinLabel>
              <Combo $h={20} $w={88} $pl={3} $mt={1}><ComboText>HSL</ComboText><Chevron c="#444" /></Combo>
              <StoredText>True Color Stored<br />as RGB:</StoredText>
              <RgbValues>
                <span>Red:</span><span>0</span>
                <span>Green:</span><span>0</span>
                <span>Blue:</span><span>0</span>
              </RgbValues>
              <SwatchPair width="66" height="65" viewBox="0 0 66 65">
                <path d="M33 1h32v35H53v28H1V13h32z" fill="#000" stroke="#c4c4c4" strokeWidth="2" />
              </SwatchPair>
            </ColorRight>
          </ColorPanel>
        </WhitePanel>
        <DialogFoot $mt={11} $pr={12}>
          <Btn $w={71} $primary>OK</Btn>
          <Btn $w={70} $ml={6}>Cancel</Btn>
          <Btn $w={73} $ml={7}><span><Mnemonic>H</Mnemonic>elp</span></Btn>
        </DialogFoot>
      </Dialog>

      <Cursor width="13" height="20" viewBox="0 0 13 20">
        <path d="M1 1v15l4-3 2.500 6 2.500-1-2.500-6h5z" fill="#fff" stroke="#000" strokeWidth="1" />
      </Cursor>
    </Page>
  );
};

export default App;
